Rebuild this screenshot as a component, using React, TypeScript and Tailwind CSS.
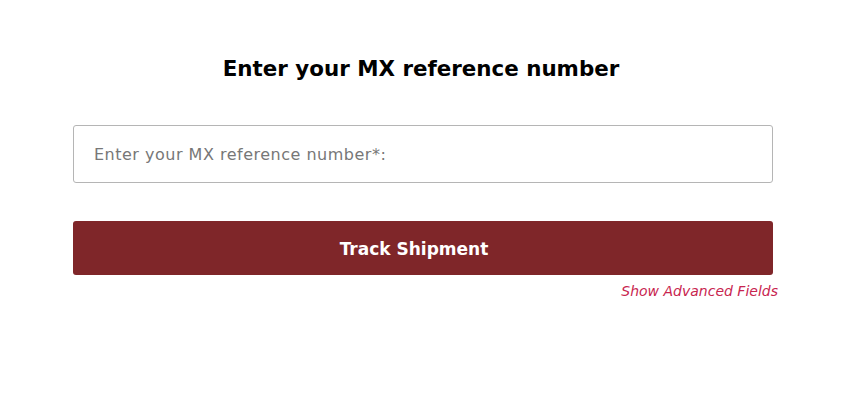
import React from "react";

export default function App() {
  return (
    <div className="min-h-[400px] w-full bg-white font-['DejaVu_Sans',sans-serif]">
      <h1 className="pt-[54px] text-center text-[21.4px] font-bold leading-[30px] text-black">
        Enter your MX reference number
      </h1>

      <div className="ml-[73px] flex w-[700px] flex-col">
        <input
          type="text"
          placeholder="Enter your MX reference number*:"
          className="mt-[41px] h-[58px] w-full rounded-[3px] border border-[#b5b5b5] px-[20px] text-[16px] tracking-[0.5px] text-[#333] placeholder:text-[#777] outline-none"
        />

        <button className="mt-[38px] h-[54px] w-full rounded-[3px] bg-[#7f2629] pt-[3px] pr-[18px] text-[17px] font-bold text-white">
          Track Shipment
        </button>

        <div className="-mr-[5px] mt-[7px] text-right leading-[18px]">
          <a href="#" className="text-[14px] italic text-[#c8254f]">
            Show Advanced Fields
          </a>
        </div>
      </div>
    </div>
  );
}
